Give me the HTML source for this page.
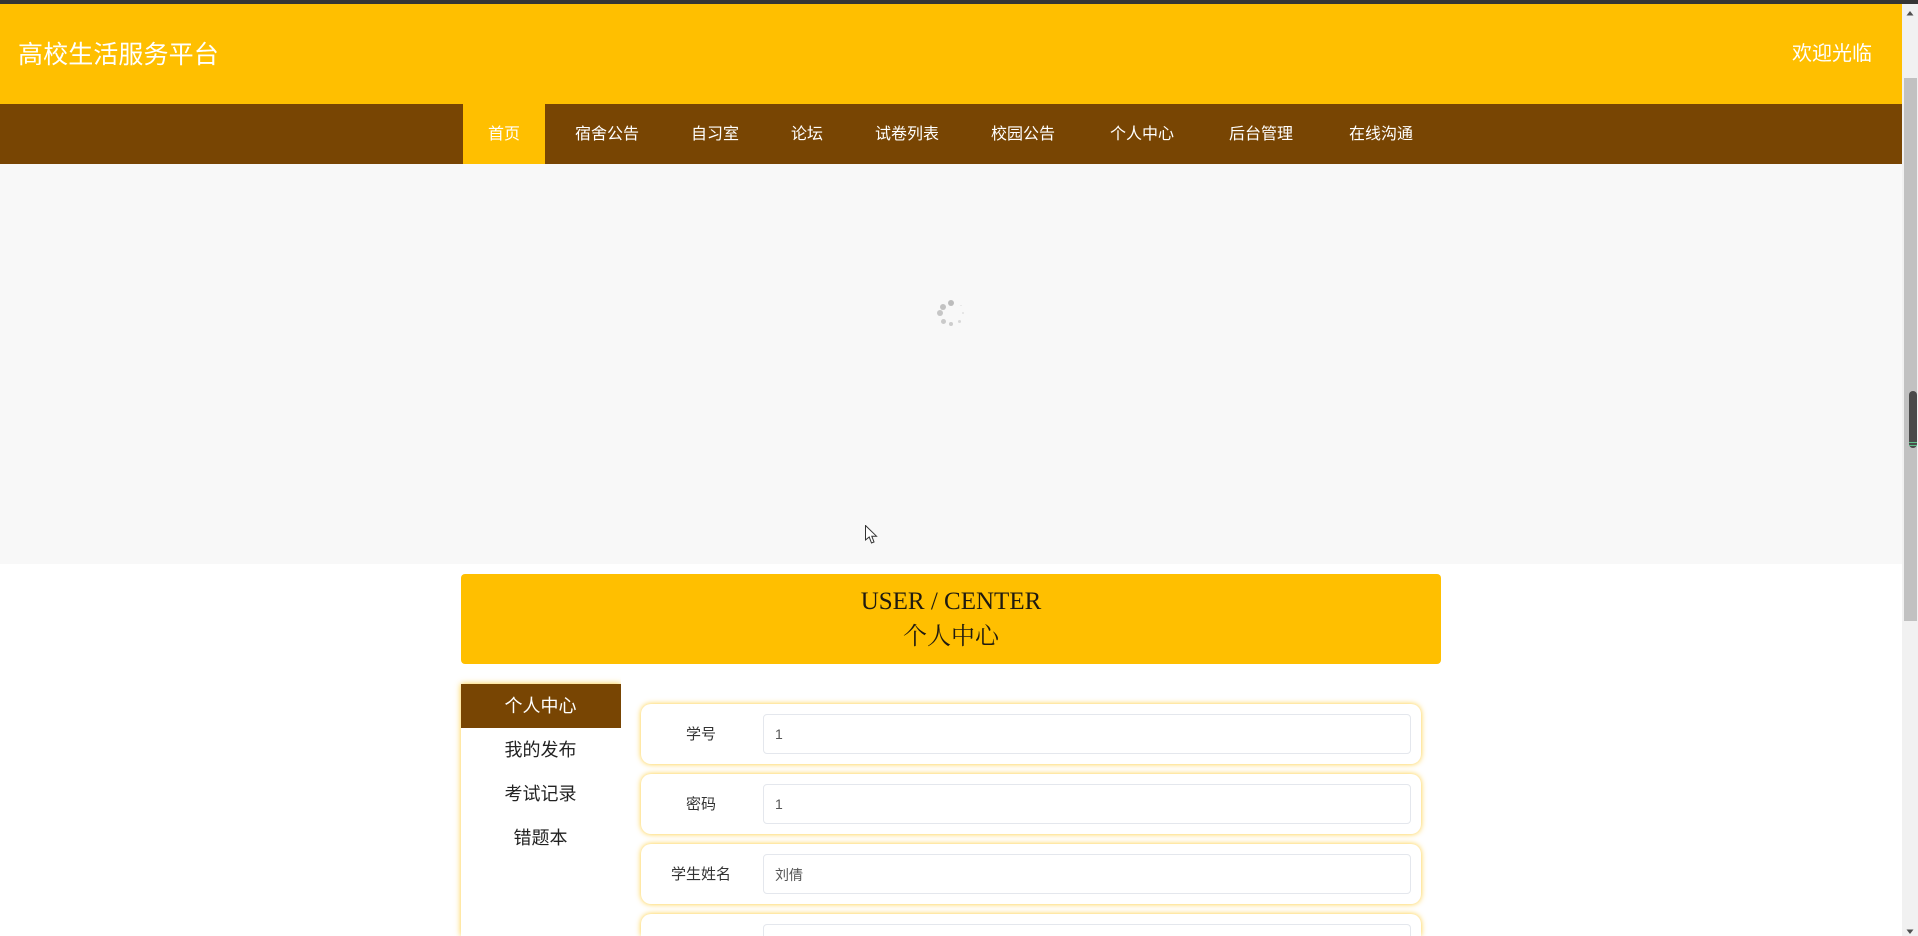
<!DOCTYPE html>
<html lang="zh"><head><meta charset="utf-8"><title>高校生活服务平台</title>
<style>
html,body{margin:0;padding:0;width:1918px;height:936px;overflow:hidden;background:#fff;font-family:"Liberation Sans","Noto Sans CJK SC",sans-serif}
#wrap{position:relative;width:1918px;height:936px;overflow:hidden}
.a{position:absolute;white-space:nowrap}
#top{left:0;top:0;width:1918px;height:4px;background:#353535}
#head{left:0;top:4px;width:1902px;height:100px;background:#ffbf00}
#nav{left:0;top:104px;width:1902px;height:60px;background:#784503}
#act{left:463px;top:104px;width:82px;height:60px;background:#ffbf00}
.n{top:105px;height:59px;line-height:60px;color:#fff;font-size:16px}
#slide{left:0;top:164px;width:1902px;height:400px;background:#f8f8f8}
.d{position:absolute;border-radius:50%}
#title{left:461px;top:574px;width:980px;height:90px;background:#ffbf00;border-radius:4px;text-align:center;color:#1f1a10}
.l1{position:absolute;left:0;right:0;top:10px;font:25px/35px "Liberation Serif","Noto Serif CJK SC",serif}
.l2{position:absolute;left:0;right:0;top:46px;font:24px/35px "Liberation Serif","Noto Serif CJK SC",serif}
#side{left:461px;top:684px;width:160px;height:252px;background:#fff;box-shadow:0 0 6px rgba(255,191,0,.8);clip-path:inset(-10px 0 0 -10px)}
.s{height:44px;line-height:45px;text-align:center;font-size:18px;color:#222;padding-right:1px;box-sizing:border-box}
.s.on{background:#784503;color:#fff}
.f{position:absolute;left:641px;width:780px;height:60px;background:#fff;border-radius:10px;box-shadow:0 0 6px rgba(255,191,0,.8)}
.f label{position:absolute;left:0;top:0;width:120px;height:59px;line-height:60px;text-align:center;font-size:15px;color:#333;margin-top:1px}
.f div{position:absolute;left:122px;top:10px;width:635px;height:38px;border:1px solid #e4e7ed;border-radius:4px;background:#fff;font-size:14px;line-height:38px;color:#555;padding-left:11px}
.f div.c{line-height:41px;height:38px;overflow:hidden}
.f.last{height:22px;border-radius:10px 10px 0 0;clip-path:inset(-10px -10px 0 -10px)}
.f.last div{height:11px;border-bottom:none;border-radius:4px 4px 0 0}
#sb{left:1902px;top:4px;width:16px;height:932px;background:#f1f1f1}
#th{left:1904px;top:78px;width:13px;height:543px;background:#c1c1c1}
#ov{left:1909px;top:391px;width:8px;height:57px;background:#4a4a4a;border-radius:4px}
</style></head><body><div id="wrap">
<div class="a" id="top"></div>
<div class="a" id="head"></div>
<div class="a" style="left:18px;top:35px;line-height:40px;font-size:25px;letter-spacing:.1px;color:#fff">高校生活服务平台</div>
<div class="a" style="left:1792px;top:34px;line-height:40px;font-size:20px;color:#fff">欢迎光临</div>
<div class="a" id="nav"></div>
<div class="a" id="act"></div>
<div class="a n" style="left:488px">首页</div>
<div class="a n" style="left:575px">宿舍公告</div>
<div class="a n" style="left:691px">自习室</div>
<div class="a n" style="left:791px">论坛</div>
<div class="a n" style="left:875px">试卷列表</div>
<div class="a n" style="left:991px">校园公告</div>
<div class="a n" style="left:1110px">个人中心</div>
<div class="a n" style="left:1229px">后台管理</div>
<div class="a n" style="left:1349px">在线沟通</div>
<div class="a" id="slide">
<span class="d" style="left:948px;top:136px;width:6px;height:6px;background:#bcbcbc"></span>
<span class="d" style="left:940px;top:140px;width:6px;height:6px;background:#c2c2c2"></span>
<span class="d" style="left:937px;top:146px;width:6px;height:6px;background:#c6c6c6"></span>
<span class="d" style="left:941px;top:155px;width:5px;height:5px;background:#cacaca"></span>
<span class="d" style="left:949px;top:158px;width:4px;height:4px;background:#cdcdcd"></span>
<span class="d" style="left:958px;top:156px;width:3px;height:3px;background:#d8d8d8"></span>
<span class="d" style="left:962px;top:148px;width:2px;height:2px;background:#e0e0e0"></span>
<span class="d" style="left:960px;top:141px;width:2px;height:1px;background:#e4e4e4"></span>
</div>
<div class="a" id="title"><div class="l1">USER / CENTER</div><div class="l2">个人中心</div></div>
<div class="a" id="side"><div class="s on">个人中心</div><div class="s">我的发布</div><div class="s">考试记录</div><div class="s">错题本</div></div>
<div class="f" style="top:704px"><label>学号</label><div>1</div></div>
<div class="f" style="top:774px"><label>密码</label><div>1</div></div>
<div class="f" style="top:844px"><label>学生姓名</label><div class="c">刘倩</div></div>
<div class="f last" style="top:914px"><div></div></div>
<div class="a" id="sb"></div>
<div class="a" id="th"></div>
<div class="a" id="ov"></div>
<div class="a" style="left:1909px;top:442px;width:8px;height:1px;background:#5fc28a"></div>
<div class="a" style="left:1909px;top:445px;width:8px;height:1px;background:#5fc28a"></div>
<svg class="a" style="left:1906px;top:10px" width="8" height="6"><path d="M4 1L7.5 5.5H.5z" fill="#505050"/></svg>
<svg class="a" style="left:1906px;top:929px" width="8" height="6"><path d="M4 5L7.5 .5H.5z" fill="#505050"/></svg>
<svg class="a" style="left:865px;top:525px" width="14" height="20"><path d="M.5 .5V15L4.2 12L6.5 18L9 17L6.8 11.2H11.5Z" fill="#fff" stroke="#333" stroke-width="1"/></svg>
</div></body></html>
